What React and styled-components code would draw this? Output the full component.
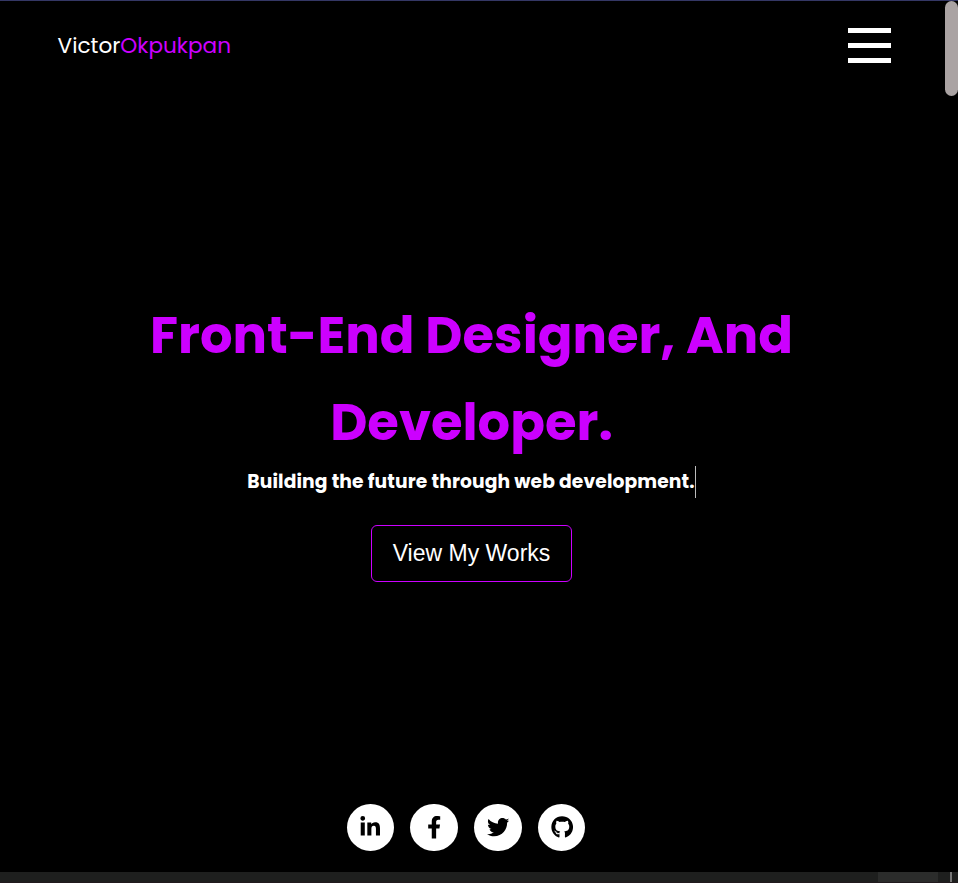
import React from "react";
import styled, { createGlobalStyle } from "styled-components";
import { FaLinkedinIn, FaFacebookF, FaTwitter, FaGithub } from "react-icons/fa";

const GlobalStyle = createGlobalStyle`
  * { box-sizing: border-box; }
  body { margin: 0; background: #000; overflow: hidden; }
  h1, h2 { margin: 0; }
`;

const Screen = styled.div`
  width: 100%;
  height: 100vh;
  display: grid;
  grid-template-columns: minmax(0, 1fr) 13px;
  grid-template-rows: 1px minmax(0, 1fr) 11px;
  background: #000;
  font-family: Poppins, Inter, sans-serif;
`;

const TopEdge = styled.div`
  grid-column: 1 / -1;
  background: #343765;
`;

const Page = styled.div`
  padding-right: 2px;
  display: flex;
  flex-direction: column;
  align-items: center;
`;

const Header = styled.header`
  align-self: stretch;
  height: 89px;
  padding: 0 52px 0 57.6px;
  display: flex;
  align-items: center;
  justify-content: space-between;
`;

const Logo = styled.div`
  font-size: 21.6px;
  line-height: 32px;
  color: #fff;
  white-space: nowrap;
`;

const Accent = styled.span`
  color: #cc00ff;
`;

const MenuButton = styled.button`
  width: 43px;
  padding: 0;
  border: 0;
  background: none;
  display: flex;
  flex-direction: column;
  gap: 10px;
`;

const MenuBar = styled.span`
  height: 5px;
  background: #fff;
`;

const Hero = styled.main`
  margin-top: 202px;
  display: flex;
  flex-direction: column;
  align-items: center;
`;

const Title = styled.h1`
  display: flex;
  flex-direction: column;
  align-items: center;
  font-size: 51.2px;
  line-height: 87px;
  font-weight: 700;
  color: #cc00ff;
  white-space: nowrap;
`;

const Tagline = styled.h2`
  height: 32px;
  border-right: 1px solid #bbb;
  font-size: 18.72px;
  line-height: 31px;
  font-weight: 700;
  letter-spacing: 0.1px;
  color: #fff;
  white-space: nowrap;
`;

const WorksButton = styled.button`
  width: 201px;
  height: 57px;
  margin-top: 27px;
  padding: 0;
  border: 1px solid #cc00ff;
  border-radius: 6px;
  background: none;
  color: #fff;
  font-family: "Liberation Sans", Arial, sans-serif;
  font-size: 23px;
`;

const Socials = styled.nav`
  margin: auto 11px 20.8px 0;
  display: flex;
  gap: 16.3px;
`;

const SocialLink = styled.a`
  width: 47.4px;
  height: 47.4px;
  border-radius: 50%;
  display: flex;
  align-items: center;
  justify-content: center;
  background: #fff;
  color: #000;
  font-size: 22.4px;
  padding-left: ${({ $nudge }) => $nudge || 0}px;
`;

const ScrollTrack = styled.div`
  background: #000;
`;

const ScrollThumb = styled.div`
  height: 95px;
  border-radius: 7px;
  background: #aaa3a3;
`;

const BottomEdge = styled.div`
  grid-column: 1 / -1;
  display: grid;
  grid-template-columns: 1fr 60px 12px 2px 6px;
  background: #1e1f1e;
  border-bottom: 1px solid #211a1d;
`;

const BottomSegment = styled.div`
  grid-column: ${({ $column }) => $column};
  background: ${({ $color }) => $color};
`;

const socials = [
  { label: "LinkedIn", Icon: FaLinkedinIn },
  { label: "Facebook", Icon: FaFacebookF },
  { label: "Twitter", Icon: FaTwitter },
  { label: "GitHub", Icon: FaGithub, nudge: 1.2 },
];

export default function App() {
  return (
    <Screen>
      <GlobalStyle />
      <TopEdge />
      <Page>
        <Header>
          <Logo>
            Victor<Accent>Okpukpan</Accent>
          </Logo>
          <MenuButton aria-label="Menu">
            <MenuBar />
            <MenuBar />
            <MenuBar />
          </MenuButton>
        </Header>
        <Hero>
          <Title>
            <span>Front-End Designer, And</span>
            <span>Developer.</span>
          </Title>
          <Tagline>Building the future through web development.</Tagline>
          <WorksButton>View My Works</WorksButton>
        </Hero>
        <Socials>
          {socials.map(({ label, Icon, nudge }) => (
            <SocialLink key={label} aria-label={label} href="#" $nudge={nudge}>
              <Icon />
            </SocialLink>
          ))}
        </Socials>
      </Page>
      <ScrollTrack>
        <ScrollThumb />
      </ScrollTrack>
      <BottomEdge>
        <BottomSegment $column={2} $color="#2b2c2b" />
        <BottomSegment $column={4} $color="#777" />
      </BottomEdge>
    </Screen>
  );
}
